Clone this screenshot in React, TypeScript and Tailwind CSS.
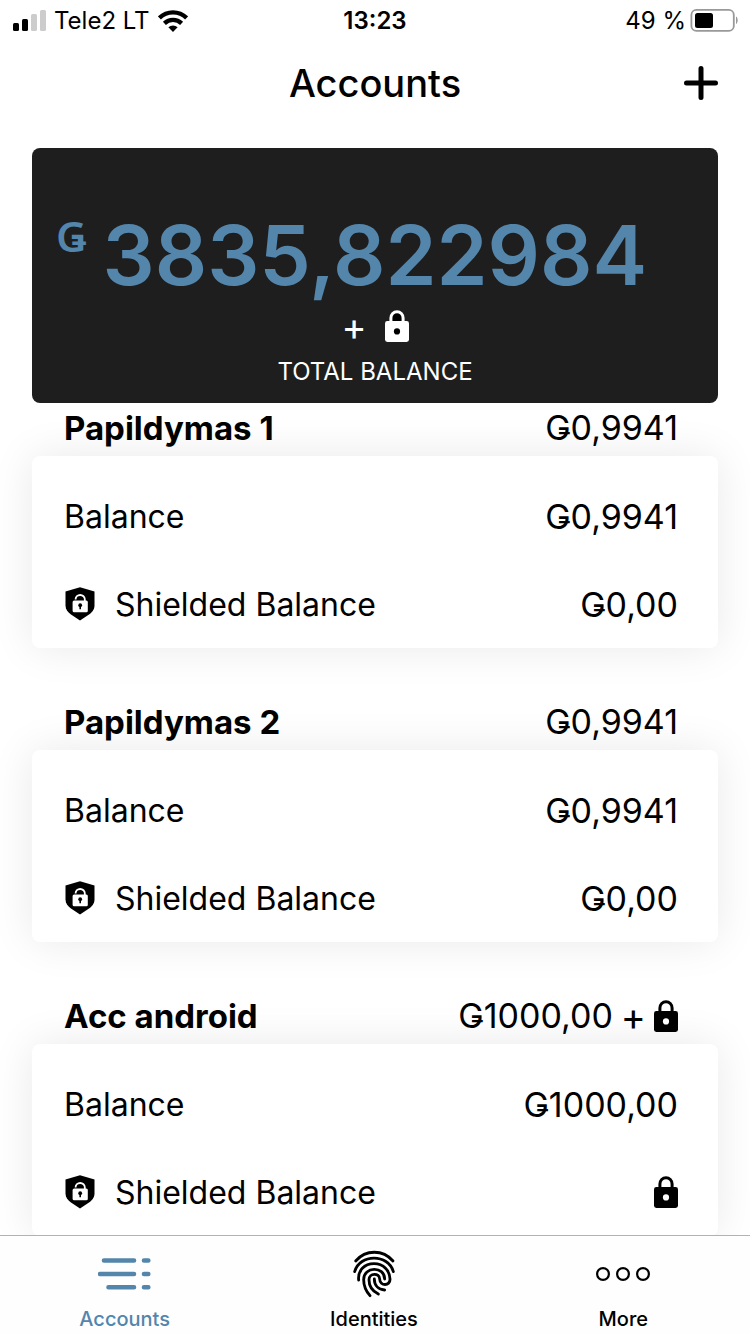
import type { ReactNode } from "react";

function LockIcon({ light = false }: { light?: boolean }) {
  return (
    <svg viewBox="0 0 24 32" className="h-8 w-6 shrink-0" role="img" aria-label="Locked">
      {light && <path d="M6 12V8a6 6 0 0 1 12 0v4z" fill="#000" />}
      <path
        d="M5.9 13V8a6.1 6.3 0 0 1 12.2 0v5"
        fill="none"
        stroke={light ? "#fff" : "#000"}
        strokeWidth="3"
      />
      <rect y="11" width="24" height="21" rx="2.4" fill={light ? "#fff" : "#000"} />
      <circle cx="12" cy="21.4" r="3.1" fill={light ? "#000" : "#fff"} />
    </svg>
  );
}

function ShieldIcon() {
  return (
    <svg viewBox="0 0 30 34" className="h-[34px] w-[30px] shrink-0" aria-hidden="true">
      <path
        d="M15 0.3 L29.5 4.6 V18.5 C29.5 22.5 27 25.4 24 27.6 L15 33.6 L6 27.6 C3 25.4 0.5 22.5 0.5 18.5 V4.6 Z"
        fill="#000"
      />
      <path d="M10.6 12.6V12.3a4.6 4.3 0 0 1 9.2 0v2.2" fill="none" stroke="#fff" strokeWidth="1.8" />
      <rect x="7.6" y="13.6" width="15.2" height="11.6" rx="1.5" fill="#fff" />
      <circle cx="15.2" cy="18.2" r="1.9" fill="#000" />
      <path d="M14.4 18.5h1.6v3.8h-1.6z" fill="#000" />
    </svg>
  );
}

function SignalIcon() {
  return (
    <svg viewBox="0 0 34 22" className="h-[22px] w-[34px]" aria-label="Signal" role="img">
      <rect x="1" y="13" width="6" height="8" rx="1.5" fill="#000" />
      <rect x="10" y="9" width="6" height="12" rx="1.5" fill="#000" />
      <rect x="19" y="4" width="6" height="17" rx="1.5" fill="#ccc" />
      <rect x="28" y="0" width="6" height="21" rx="1.5" fill="#ccc" />
    </svg>
  );
}

function WifiIcon() {
  return (
    <svg viewBox="0 0 30 22" className="h-[22px] w-[30px]" aria-label="Wi-Fi" role="img">
      <g fill="none" stroke="#000" strokeWidth="4.3">
        <path d="M1.4 8a19.5 19.5 0 0 1 27.2 0" />
        <path d="M6.4 13.4a12.5 12.5 0 0 1 17.2 0" />
      </g>
      <path d="M15 22l-4.6-4.7a6.6 6.6 0 0 1 9.2 0z" fill="#000" />
    </svg>
  );
}

function BatteryIcon() {
  return (
    <svg viewBox="0 0 48 23" className="h-[23px] w-12" aria-label="Battery" role="img">
      <rect x="1.4" y="0.9" width="42.4" height="21" rx="5" fill="none" stroke="#999" strokeWidth="1.8" />
      <rect x="5" y="4" width="18" height="15" rx="2.5" fill="#000" />
      <path d="M46 7.500c2.200 1 2.200 6.500 0 7.500z" fill="#999" />
    </svg>
  );
}

function AccountsIcon() {
  return (
    <svg viewBox="0 0 54 34" className="h-[34px] w-[54px]" aria-hidden="true">
      <g stroke="#5485ab" strokeWidth="4.6" strokeLinecap="round">
        <path d="M6 3.5h30M46 3.5h4.3M2 17h34M46 17h4.3M10.5 30.3h25.5M46 30.3h4.3" />
      </g>
    </svg>
  );
}

function FingerprintIcon() {
  return (
    <svg viewBox="0 0 126 144" className="h-12 w-[42px]" aria-hidden="true">
      <g fill="none" stroke="#000" strokeWidth="8.5" strokeLinecap="round">
        <path d="M8 33C38 -2 90 -2 120 33" />
        <path d="M5 65C20 11 106 11 121 65" />
        <path d="M17 90C14 62 34 41 63 41C92 41 110 62 111 87C112 109 81 109 80 87C80 68 48 68 48 89C48 109 60 124 76 132" />
        <path d="M51 137C38 122 32 106 32 89C32 48 95 48 95 87" />
        <path d="M64 87C64 107 77 119 95 120" />
      </g>
    </svg>
  );
}

function MoreIcon() {
  return (
    <svg viewBox="0 0 54 14" className="h-[14px] w-[54px]" aria-hidden="true">
      <g fill="none" stroke="#000" strokeWidth="2.2">
        <circle cx="7" cy="7" r="5.9" />
        <circle cx="27" cy="7" r="5.9" />
        <circle cx="47" cy="7" r="5.9" />
      </g>
    </svg>
  );
}

type Account = { name: string; total: string; balance: string; shielded: string | null };

const accounts: Account[] = [
  { name: "Papildymas 1", total: "Ǥ0,9941", balance: "Ǥ0,9941", shielded: "Ǥ0,00" },
  { name: "Papildymas 2", total: "Ǥ0,9941", balance: "Ǥ0,9941", shielded: "Ǥ0,00" },
  { name: "Acc android", total: "Ǥ1000,00", balance: "Ǥ1000,00", shielded: null },
];

function AccountItem({ account }: { account: Account }) {
  return (
    <li className="text-[34px]">
      <div className="flex h-[52px] items-start justify-between pr-10 pl-8 leading-[48px]">
        <h2 className="text-[33px] font-bold">{account.name}</h2>
        <span className="flex items-center gap-2">
          {account.total}
          {account.shielded === null && (
            <>
              <span className="text-[38px]">+</span>
              <LockIcon />
            </>
          )}
        </span>
      </div>
      <div className="rounded-lg bg-white pt-4 pr-10 pl-8 shadow-[0_0_44px_rgba(0,0,0,0.09)]">
        <div className="flex h-[88px] items-center justify-between">
          <span className="pt-px text-[32px]">Balance</span>
          <span>{account.balance}</span>
        </div>
        <div className="flex h-[88px] items-center justify-between">
          <span className="flex items-center gap-5 pl-px text-[32px]">
            <ShieldIcon />
            <span className="pt-px">Shielded Balance</span>
          </span>
          {account.shielded ?? <LockIcon />}
        </div>
      </div>
    </li>
  );
}

function Tab({ icon, label, active = false }: { icon: ReactNode; label: string; active?: boolean }) {
  return (
    <button
      type="button"
      aria-current={active ? "page" : undefined}
      className={`flex flex-col items-center pt-3 text-xl leading-6 font-medium ${active ? "text-[#5485ab]" : "text-black"}`}
    >
      <span className="flex h-[52px] items-center">{icon}</span>
      <span className="mt-[7px]">{label}</span>
    </button>
  );
}

export default function App() {
  return (
    <div className="flex h-screen flex-col bg-white font-['Inter','Noto_Sans',sans-serif] text-black">
      <div className="grid h-10 shrink-0 grid-cols-3 items-center px-3 pt-px text-2xl">
        <div className="flex items-center gap-2">
          <SignalIcon />
          <span>Tele2 LT</span>
          <WifiIcon />
        </div>
        <div className="text-center font-semibold">13:23</div>
        <div className="flex items-center justify-end gap-1">
          <span>49 %</span>
          <BatteryIcon />
        </div>
      </div>

      <header className="grid h-[84px] shrink-0 grid-cols-[1fr_auto_1fr] items-center px-8 pt-0.5">
        <h1 className="col-start-2 text-[38px] font-medium">Accounts</h1>
        <button type="button" aria-label="Add account" className="justify-self-end">
          <svg viewBox="0 0 34 34" className="size-[34px]" aria-hidden="true">
            <path d="M17 2.5v29M2.5 17h29" stroke="#000" strokeWidth="5" strokeLinecap="round" />
          </svg>
        </button>
      </header>

      <section className="mx-8 mt-6 flex h-[255px] shrink-0 flex-col items-center rounded-lg bg-[#1e1e1e] pt-[60px] text-white">
        <div className="flex w-full items-start gap-4 pl-6 text-[#5485ab]">
          <span className="font-['Noto_Sans',sans-serif] text-[42px] leading-[56px] font-semibold">Ǥ</span>
          <span className="text-[82px] leading-[96px] font-semibold">3835,822984</span>
        </div>
        <div className="flex h-[44px] items-center gap-[18px]">
          <span className="text-[38px]">+</span>
          <LockIcon light />
        </div>
        <h2 className="mt-2 text-2xl">TOTAL BALANCE</h2>
      </section>

      <main className="min-h-0 flex-1 overflow-hidden px-8 pt-px">
        <ul className="flex flex-col gap-[50px]">
          {accounts.map((account) => (
            <AccountItem key={account.name} account={account} />
          ))}
        </ul>
      </main>

      <nav className="grid h-[99px] shrink-0 grid-cols-3 border-t border-[#b2b2b2] bg-[#fefefe] pr-0.5">
        <Tab active icon={<AccountsIcon />} label="Accounts" />
        <Tab icon={<FingerprintIcon />} label="Identities" />
        <Tab icon={<MoreIcon />} label="More" />
      </nav>
    </div>
  );
}
